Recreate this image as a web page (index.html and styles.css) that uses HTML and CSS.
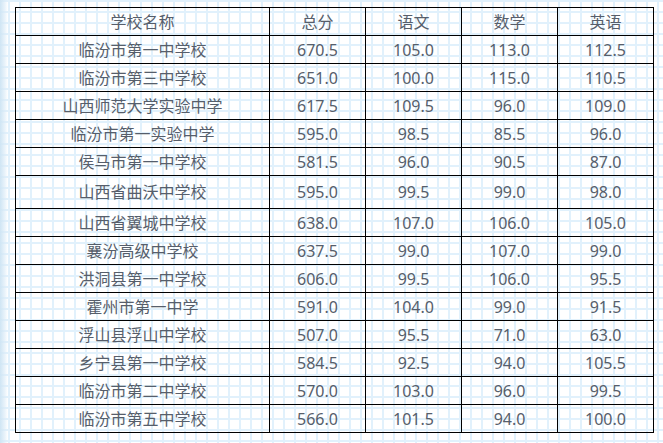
FILE: index.html
```html
<!DOCTYPE html>
<html lang="zh">
<head>
<meta charset="utf-8">
<title>成绩表</title>
<link rel="stylesheet" href="styles.css">
</head>
<body>
<div class="page">
<table class="scores">
<colgroup>
<col class="c-name"><col class="c-num"><col class="c-num"><col class="c-num"><col class="c-num">
</colgroup>
<thead>
<tr><th>学校名称</th><th>总分</th><th>语文</th><th>数学</th><th>英语</th></tr>
</thead>
<tbody>
<tr><td>临汾市第一中学校</td><td>670.5</td><td>105.0</td><td>113.0</td><td>112.5</td></tr>
<tr><td>临汾市第三中学校</td><td>651.0</td><td>100.0</td><td>115.0</td><td>110.5</td></tr>
<tr><td>山西师范大学实验中学</td><td>617.5</td><td>109.5</td><td>96.0</td><td>109.0</td></tr>
<tr><td>临汾市第一实验中学</td><td>595.0</td><td>98.5</td><td>85.5</td><td>96.0</td></tr>
<tr><td>侯马市第一中学校</td><td>581.5</td><td>96.0</td><td>90.5</td><td>87.0</td></tr>
<tr class="tall"><td>山西省曲沃中学校</td><td>595.0</td><td>99.5</td><td>99.0</td><td>98.0</td></tr>
<tr><td>山西省翼城中学校</td><td>638.0</td><td>107.0</td><td>106.0</td><td>105.0</td></tr>
<tr><td>襄汾高级中学校</td><td>637.5</td><td>99.0</td><td>107.0</td><td>99.0</td></tr>
<tr><td>洪洞县第一中学校</td><td>606.0</td><td>99.5</td><td>106.0</td><td>95.5</td></tr>
<tr><td>霍州市第一中学</td><td>591.0</td><td>104.0</td><td>99.0</td><td>91.5</td></tr>
<tr><td>浮山县浮山中学校</td><td>507.0</td><td>95.5</td><td>71.0</td><td>63.0</td></tr>
<tr><td>乡宁县第一中学校</td><td>584.5</td><td>92.5</td><td>94.0</td><td>105.5</td></tr>
<tr><td>临汾市第二中学校</td><td>570.0</td><td>103.0</td><td>96.0</td><td>99.5</td></tr>
<tr><td>临汾市第五中学校</td><td>566.0</td><td>101.5</td><td>94.0</td><td>100.0</td></tr>
</tbody>
</table>
</div>
</body>
</html>
```
FILE: styles.css
```css
html, body {
  margin: 0;
  padding: 0;
}
body {
  width: 663px;
  height: 443px;
  overflow: hidden;
  background-color: #ffffff;
  background-image:
    linear-gradient(to right, #cfe5f4 0, rgba(220,236,248,0.6) 5px, rgba(255,255,255,0) 8px),
    linear-gradient(to right, #e1f1fc 2px, rgba(255,255,255,0) 2px),
    linear-gradient(to bottom, #e1f1fc 2px, rgba(255,255,255,0) 2px);
  background-size: 8px 100%, 11px 11px, 11px 11px;
  background-repeat: no-repeat, repeat, repeat;
  background-position: 0 0, 8px 0, 0 0;
  font-family: "Noto Sans", "Noto Sans CJK SC", sans-serif;
  color: #565e6b;
}
.page {
  padding: 7px 0 0 15px;
}
.scores {
  border-collapse: collapse;
  table-layout: fixed;
  width: 639px;
}
.c-name { width: 254px; }
.c-num { width: 96px; }
.scores th,
.scores td {
  border: 1px solid #000;
  padding: 0;
  height: 27px;
  text-align: center;
  vertical-align: middle;
  font-size: 16px;
  font-weight: normal;
  line-height: 20px;
  white-space: nowrap;
}
.scores tr.tall td {
  height: 32px;
}
```
